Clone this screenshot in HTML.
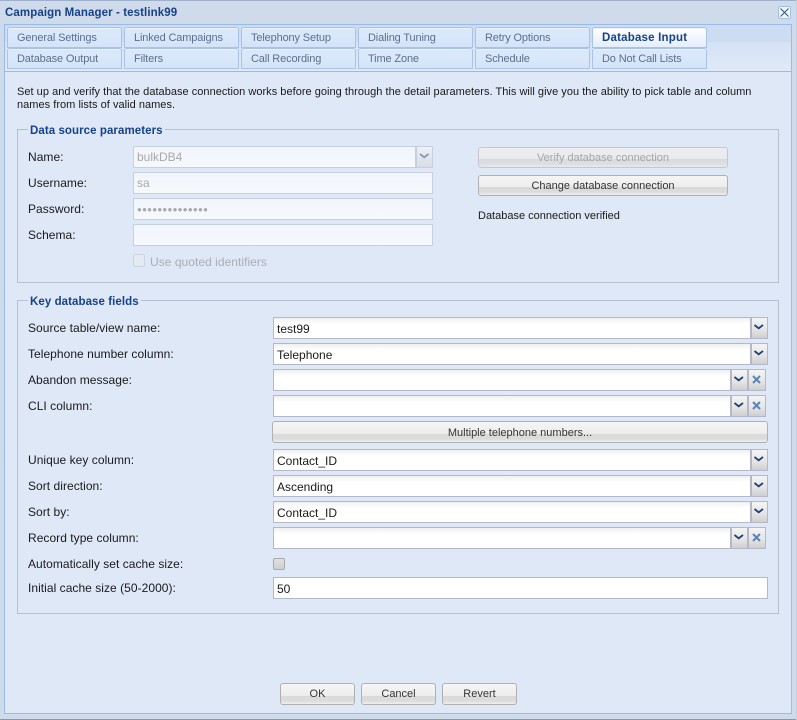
<!DOCTYPE html>
<html><head><meta charset="utf-8"><style>
html,body{margin:0;padding:0;background:#cfdbea}
#w{position:relative;width:797px;height:720px;overflow:hidden;background:#cfdbea;font:12px "Liberation Sans",sans-serif;letter-spacing:.04px;color:#1a1a1a}
#w *{box-sizing:border-box}
#w div{position:absolute;white-space:nowrap}
.t{height:21px;width:115px;background:linear-gradient(#dbe7f9,#dae8fc 40%,#d5e3f8);border:1px solid #a9c3e8;border-radius:3px 3px 0 0;color:#5c6f8c;line-height:20px;padding-left:9px;box-shadow:inset 0 1px 0 #edf3fc;font-size:11px;letter-spacing:-.14px}
.l{left:28px;height:16px;line-height:16px}
.i{background:linear-gradient(#f0f0f0,#fff 6px);border:1px solid #b5b8c8;height:22px;line-height:23px;padding-left:3px;font-size:12px;letter-spacing:0;color:#1a1a1a}
.d{background:linear-gradient(#f2f5fb,#f5f8fd);border-color:#c6cfe0;color:#a8a8a8;line-height:21px}
.a{width:17px;height:22px;background:linear-gradient(#f4f4f4,#e6e6e6 55%,#cfcfcf);border:1px solid #b5b8c8}
.b{background:linear-gradient(#f5f5f5,#ededed 59%,#d9d9d9 59%,#dcdcdc 85%,#efefef);border:1px solid #b0b0b0;border-radius:3px;text-align:center;height:21px;line-height:21px;color:#333;font-size:11px;letter-spacing:0}
.f{border:1px solid #b5bfd2;left:17px;width:762px}
.g{font-weight:bold;color:#15428b;background:#dfe8f6;padding:0 2px;height:14px;line-height:14px;font-size:11.5px;letter-spacing:.07px}
.p{font-size:11px;letter-spacing:.03px}
svg{position:absolute;left:0;top:0}
</style></head><body><div id="w">
<div style="left:0;top:0;width:797px;height:1px;background:#9fb0cc"></div>
<div style="left:5px;top:5px;height:16px;line-height:16px;font-weight:bold;color:#15428b;font-size:11.5px;letter-spacing:.1px">Campaign Manager - testlink99</div>
<div style="left:778px;top:6px;width:13px;height:13px;border:1px solid #a3bfe6;border-radius:2px;background:#f0f5fc"><svg width="11" height="11" viewBox="0 0 11 11"><path d="M1.5 1.5L9.5 9.5M9.5 1.5L1.5 9.5" stroke="#2f4f7f" stroke-width="1" fill="none"/></svg></div>
<div style="left:4px;top:24px;width:788px;height:690px;background:#dfe8f6;border:1px solid #99bbe8"></div>
<div style="left:5px;top:25px;width:786px;height:17px;background:#cbdcf3"></div>
<div style="left:5px;top:42px;width:786px;height:29px;background:linear-gradient(#d5e2f5,#e0e9f7)"></div>
<div style="left:5px;top:71px;width:786px;height:1px;background:#99bbe8"></div>

<div class="t" style="left:7px;top:27px">General Settings</div>
<div class="t" style="left:124px;top:27px">Linked Campaigns</div>
<div class="t" style="left:241px;top:27px">Telephony Setup</div>
<div class="t" style="left:358px;top:27px">Dialing Tuning</div>
<div class="t" style="left:475px;top:27px">Retry Options</div>
<div class="t" style="left:592px;top:27px;background:linear-gradient(#fff,#e4eefd);font-weight:bold;color:#15428b;font-size:11.5px;letter-spacing:.2px">Database Input</div>
<div class="t" style="left:7px;top:48px">Database Output</div>
<div class="t" style="left:124px;top:48px">Filters</div>
<div class="t" style="left:241px;top:48px">Call Recording</div>
<div class="t" style="left:358px;top:48px">Time Zone</div>
<div class="t" style="left:475px;top:48px">Schedule</div>
<div class="t" style="left:592px;top:48px">Do Not Call Lists</div>

<div class="p" style="left:17px;top:85px;height:14px;line-height:14px">Set up and verify that the database connection works before going through the detail parameters. This will give you the ability to pick table and column</div>
<div class="p" style="left:17px;top:98px;height:14px;line-height:14px">names from lists of valid names.</div>

<div class="f" style="top:129px;height:154px"></div>
<div class="g" style="left:28px;top:124px">Data source parameters</div>
<div class="l" style="top:149px">Name:</div>
<div class="l" style="top:175px">Username:</div>
<div class="l" style="top:201px">Password:</div>
<div class="l" style="top:227px">Schema:</div>
<div class="i d" style="left:133px;top:146px;width:283px">bulkDB4</div>
<div class="a" style="left:416px;top:146px;border-color:#c6cfe0;background:linear-gradient(#eef1f6,#d8dde6)"><svg width="15" height="20" viewBox="0 0 15 20"><path d="M3 7l4.2 3.3L11.5 7" stroke="#8a9ab5" stroke-width="1.8" fill="none"/></svg></div>
<div class="i d" style="left:133px;top:172px;width:300px">sa</div>
<div class="i d" style="left:133px;top:198px;width:300px;font-size:8px;letter-spacing:.25px;color:#a8a8a8">●●●●●●●●●●●●●●</div>
<div class="i d" style="left:133px;top:224px;width:300px"></div>
<div style="left:133px;top:254px;width:12px;height:13px;border:1px solid #ccd3e0;border-radius:2px;background:#e4e9f2"></div>
<div class="l" style="left:150px;top:254px;color:#a9adb5">Use quoted identifiers</div>
<div class="b" style="left:478px;top:147px;width:250px;border-color:#c4c7cc;color:#a5a5a5;background:linear-gradient(#eceef2,#e8eaee 59%,#d8dade 59%,#dcdee2 85%,#e8eaee)">Verify database connection</div>
<div class="b" style="left:478px;top:175px;width:250px">Change database connection</div>
<div class="l p" style="left:478px;top:208px;letter-spacing:0">Database connection verified</div>

<div class="f" style="top:300px;height:314px"></div>
<div class="g" style="left:28px;top:295px">Key database fields</div>
<div class="l" style="top:320px">Source table/view name:</div>
<div class="l" style="top:346px">Telephone number column:</div>
<div class="l" style="top:372px">Abandon message:</div>
<div class="l" style="top:398px">CLI column:</div>
<div class="l" style="top:452px">Unique key column:</div>
<div class="l" style="top:478px">Sort direction:</div>
<div class="l" style="top:504px">Sort by:</div>
<div class="l" style="top:530px">Record type column:</div>
<div class="l" style="top:556px">Automatically set cache size:</div>
<div class="l" style="top:580px">Initial cache size (50-2000):</div>

<div class="i" style="left:273px;top:317px;width:478px">test99</div>
<div class="a" style="left:751px;top:317px"><svg width="15" height="20"><path d="M2.5 7l4.2 3.3L11 7" stroke="#1f3f78" stroke-width="1.8" fill="none"/></svg></div>
<div class="i" style="left:273px;top:343px;width:478px">Telephone</div>
<div class="a" style="left:751px;top:343px"><svg width="15" height="20"><path d="M2.5 7l4.2 3.3L11 7" stroke="#1f3f78" stroke-width="1.8" fill="none"/></svg></div>
<div class="i" style="left:273px;top:369px;width:458px"></div>
<div class="a" style="left:731px;top:369px"><svg width="15" height="20"><path d="M2.5 7l4.2 3.3L11 7" stroke="#1f3f78" stroke-width="1.8" fill="none"/></svg></div>
<div class="a" style="left:748px;top:369px;width:18px"><svg width="16" height="20"><path d="M4 6l7 7M11 6l-7 7" stroke="#5b83b5" stroke-width="2" fill="none"/></svg></div>
<div class="i" style="left:273px;top:395px;width:458px"></div>
<div class="a" style="left:731px;top:395px"><svg width="15" height="20"><path d="M2.5 7l4.2 3.3L11 7" stroke="#1f3f78" stroke-width="1.8" fill="none"/></svg></div>
<div class="a" style="left:748px;top:395px;width:18px"><svg width="16" height="20"><path d="M4 6l7 7M11 6l-7 7" stroke="#5b83b5" stroke-width="2" fill="none"/></svg></div>
<div class="b" style="left:272px;top:421px;width:496px;height:22px;line-height:22px">Multiple telephone numbers...</div>
<div class="i" style="left:273px;top:449px;width:478px">Contact_ID</div>
<div class="a" style="left:751px;top:449px"><svg width="15" height="20"><path d="M2.5 7l4.2 3.3L11 7" stroke="#1f3f78" stroke-width="1.8" fill="none"/></svg></div>
<div class="i" style="left:273px;top:475px;width:478px">Ascending</div>
<div class="a" style="left:751px;top:475px"><svg width="15" height="20"><path d="M2.5 7l4.2 3.3L11 7" stroke="#1f3f78" stroke-width="1.8" fill="none"/></svg></div>
<div class="i" style="left:273px;top:501px;width:478px">Contact_ID</div>
<div class="a" style="left:751px;top:501px"><svg width="15" height="20"><path d="M2.5 7l4.2 3.3L11 7" stroke="#1f3f78" stroke-width="1.8" fill="none"/></svg></div>
<div class="i" style="left:273px;top:527px;width:458px"></div>
<div class="a" style="left:731px;top:527px"><svg width="15" height="20"><path d="M2.5 7l4.2 3.3L11 7" stroke="#1f3f78" stroke-width="1.8" fill="none"/></svg></div>
<div class="a" style="left:748px;top:527px;width:18px"><svg width="16" height="20"><path d="M4 6l7 7M11 6l-7 7" stroke="#5b83b5" stroke-width="2" fill="none"/></svg></div>
<div style="left:273px;top:558px;width:12px;height:12px;border:1px solid #aaa;border-radius:2px;background:linear-gradient(#e0e0e0,#d0d0d0)"></div>
<div class="i" style="left:273px;top:577px;width:495px;background:#fff">50</div>

<div class="b" style="left:280px;top:683px;width:75px;height:22px;line-height:21px">OK</div>
<div class="b" style="left:361px;top:683px;width:75px;height:22px;line-height:21px">Cancel</div>
<div class="b" style="left:442px;top:683px;width:75px;height:22px;line-height:21px">Revert</div>

<div style="left:0;top:719px;width:797px;height:1px;background:#8a97a8"></div>
<div style="left:796px;top:0;width:1px;height:720px;background:#c4d0e0"></div>
</div></body></html>
